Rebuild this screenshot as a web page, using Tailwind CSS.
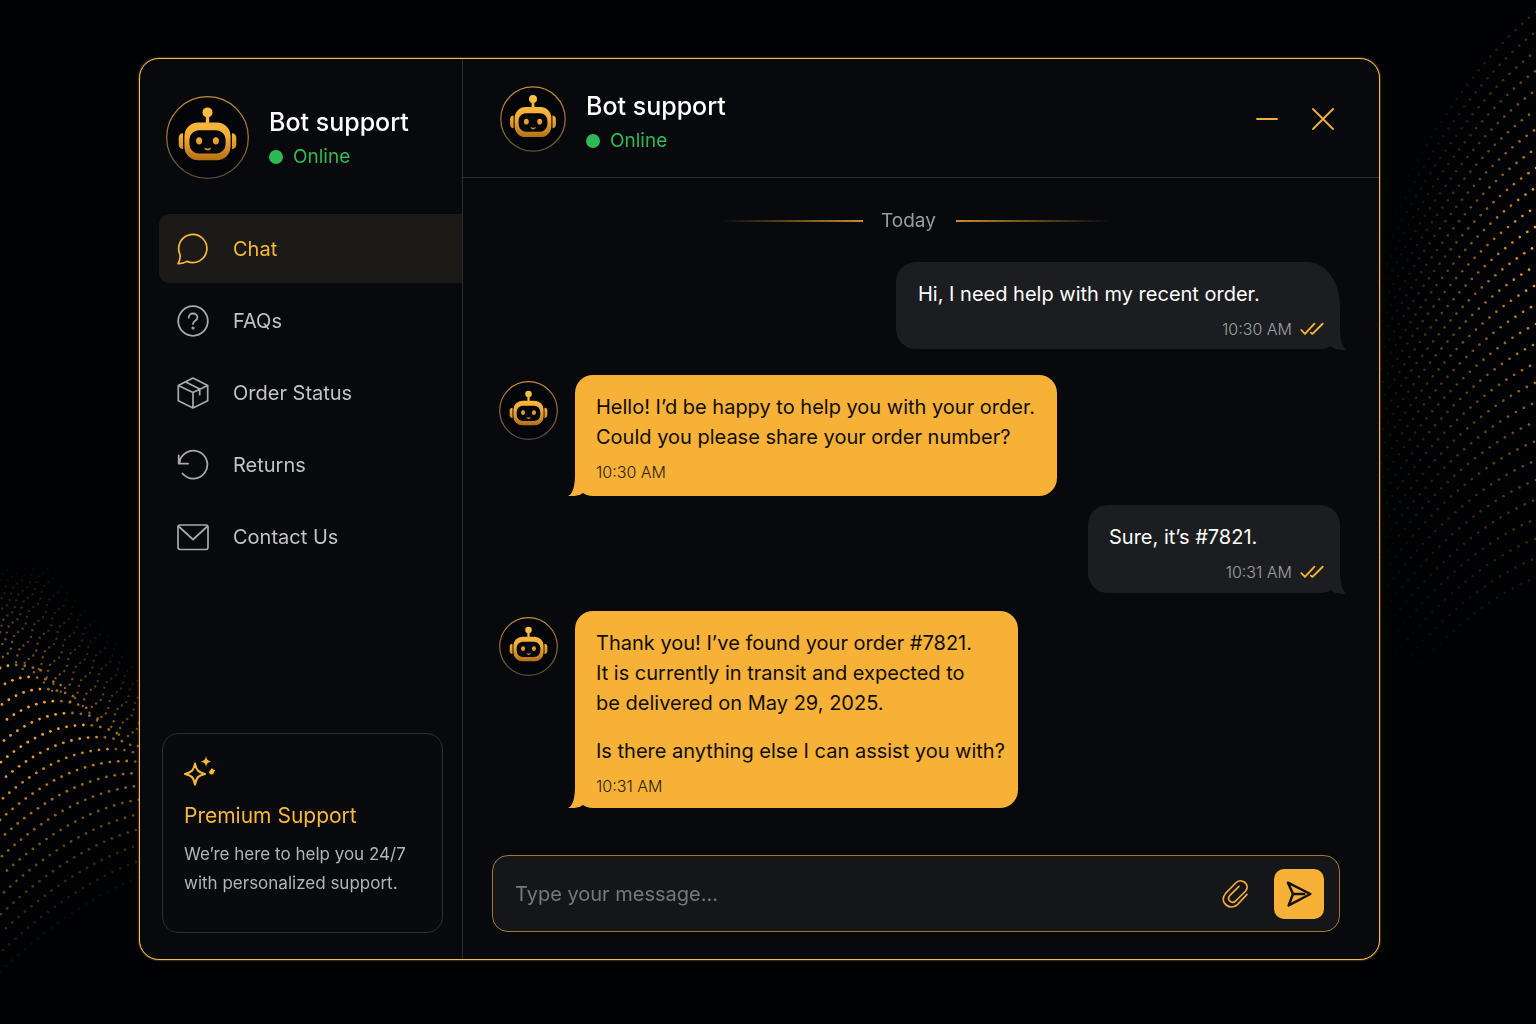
<!DOCTYPE html>
<html lang="en">
<head>
    <meta charset="UTF-8">
    <meta name="viewport" content="width=device-width, initial-scale=1.0">
    <title>Bot support</title>
    <script src="https://cdn.jsdelivr.net/npm/@tailwindcss/browser@4"></script>
</head>
<body class="relative min-h-screen flex bg-[#010204] pt-[58px] pr-[156px] pb-16 pl-[139px] font-['Inter','Liberation_Sans',sans-serif] text-white">

    <!-- Shared drawings -->
    <svg class="absolute w-0 h-0" aria-hidden="true">
        <defs>
            <linearGradient id="gold" x1="0" y1="30" x2="0" y2="196" gradientUnits="userSpaceOnUse">
                <stop offset="0" stop-color="#fcc443"/>
                <stop offset="0.55" stop-color="#f3ac34"/>
                <stop offset="1" stop-color="#b06c14"/>
            </linearGradient>
            <linearGradient id="ring" x1="0" y1="0" x2="0" y2="1">
                <stop offset="0" stop-color="#c48d38"/>
                <stop offset="1" stop-color="#5b4c39"/>
            </linearGradient>
            <symbol id="robot" viewBox="0 0 248 248">
                <g fill="url(#gold)">
                    <circle cx="124" cy="49" r="15"/>
                    <rect x="119" y="58" width="10" height="26"/>
                    <path fill-rule="evenodd" d="M96 79h56a41 41 0 0 1 41 41v31a41 41 0 0 1-41 41H96a41 41 0 0 1-41-41v-31a41 41 0 0 1 41-41zM98 102a28 28 0 0 0-28 28v14a28 28 0 0 0 28 28h52a28 28 0 0 0 28-28v-14a28 28 0 0 0-28-28z"/>
                    <path d="M51 111v48c-8 0-13-6-13-13v-22c0-7 5-13 13-13z"/>
                    <path d="M197 111v48c8 0 13-6 13-13v-22c0-7-5-13-13-13z"/>
                    <ellipse cx="99" cy="134" rx="9" ry="11"/>
                    <ellipse cx="149" cy="134" rx="9" ry="11"/>
                    <path d="M114 154q10 5 21 0q-2 9-10 9q-9 0-11-9z"/>
                </g>
            </symbol>
            <symbol id="ticks" viewBox="0 0 73 42">
                <path fill="none" stroke="#fbb834" stroke-width="5.5" stroke-linecap="round" stroke-linejoin="round" d="M4 24l11 12L44 5M33 32l5 4L69 5"/>
            </symbol>
        </defs>
    </svg>

    <!-- Dotted waves on both sides -->
    <canvas id="wave-left" width="140" height="1024" class="absolute left-0 top-0"></canvas>
    <canvas id="wave-right" width="156" height="1024" class="absolute right-0 top-0"></canvas>

    <div class="relative flex-1 flex overflow-hidden rounded-[20px] border border-[#f5bd45] bg-[#08090c] shadow-[0_0_2px_#c48d38]">

        <aside class="w-[323px] shrink-0 flex flex-col border-r border-[#2c2d30] pt-[37px] pb-[26px]">
            <div class="flex items-center gap-5 pl-[26px]">
                <svg class="w-[83px] h-[83px]" viewBox="0 0 248 248" role="img" aria-label="Bot">
                    <circle cx="124" cy="124" r="122" fill="#040508" stroke="url(#ring)" stroke-width="4"/>
                    <use href="#robot"/>
                </svg>
                <div>
                    <h2 class="text-[25px] leading-8 font-medium">Bot support</h2>
                    <p class="mt-[7px] flex items-center gap-[10px] text-[19px] leading-6 text-[#2dba55]">
                        <span class="w-[14px] h-[14px] rounded-full bg-[#2dba55]"></span>Online
                    </p>
                </div>
            </div>

            <nav class="mt-[35px] ml-[19px] flex flex-col gap-[3px] text-xl text-[#c3c3c5]">
                <a href="#" aria-current="page" class="h-[69px] flex items-center gap-6 rounded-l-[10px] bg-[#1b1a18] px-[18px] text-[#f9b836]">
                    <svg class="w-8 h-8" viewBox="0 0 32 32" fill="none" stroke="#f9b836" stroke-width="1.7" stroke-linejoin="round">
                        <path d="M1.1 30.6C2.8 27.600 3.500 24.700 3 21.500A14.100 14.100 0 1 1 10 28.400C7.300 30.100 4.600 30.800 1.100 30.600z"/>
                    </svg>
                    Chat
                </a>
                <a href="#" class="h-[69px] flex items-center gap-6 px-[18px]">
                    <svg class="w-8 h-8" viewBox="0 0 32 32" fill="none" stroke="#a9a9ab" stroke-width="1.8" stroke-linecap="round">
                        <circle cx="16" cy="16" r="14.8"/>
                        <path d="M11.7 12.7c0-2.5 1.9-4.2 4.3-4.2s4.4 1.6 4.4 3.9c0 3.4-4.4 3.2-4.4 6.6"/>
                        <circle cx="16" cy="23" r="0.7" fill="#a9a9ab"/>
                    </svg>
                    FAQs
                </a>
                <a href="#" class="h-[69px] flex items-center gap-6 px-[18px]">
                    <svg class="w-8 h-8" viewBox="0 0 32 32" fill="none" stroke="#a9a9ab" stroke-width="1.7" stroke-linejoin="round" stroke-linecap="round">
                        <path d="M16 1l14.700 7.500v15.300L16 31 1.300 23.800V8.500zM1.300 8.500L16 15.500l14.700-7M16 15.500v15.500M8.700 5l14 7.100v5.600"/>
                    </svg>
                    Order Status
                </a>
                <a href="#" class="h-[69px] flex items-center gap-6 px-[18px]">
                    <svg class="w-8 h-8" viewBox="0 0 32 32" fill="none" stroke="#a9a9ab" stroke-width="1.8" stroke-linejoin="round" stroke-linecap="round">
                        <path d="M5.500 24.500A14 14 0 1 0 2.400 14.300M1.700 6.500v8.200h9.300"/>
                    </svg>
                    Returns
                </a>
                <a href="#" class="h-[69px] flex items-center gap-6 px-[18px]">
                    <svg class="w-8 h-8" viewBox="0 0 32 32" fill="none" stroke="#a9a9ab" stroke-width="1.7" stroke-linejoin="round">
                        <rect x="1" y="4" width="30" height="24.500" rx="2.200"/>
                        <path d="M1.800 5.500L16 18.500 30.200 5.500"/>
                    </svg>
                    Contact Us
                </a>
            </nav>

            <section class="mt-auto mr-[19px] ml-[22px] rounded-2xl border border-[#2c2d30] bg-[#090a0d] pt-[22px] pr-4 pb-[34px] pl-[21px]">
                <svg class="w-[32px] h-[30px]" viewBox="0 0 93 87" aria-hidden="true">
                    <path fill="none" stroke="#fbb834" stroke-width="6" stroke-linejoin="round" d="M32 22C36 42 42 48 61 52 42 56 36 62 32 83 28 62 22 56 3 52 22 48 28 42 32 22z"/>
                    <path fill="#fbb834" d="M64 0C66 11 69 13 79 16 69 19 66 21 64 32 62 21 59 19 49 16 59 13 62 11 64 0z"/>
                    <path fill="#fbb834" d="M81 35q3 5 10 7-4 3-4 7-4 6-10 4-6-3-4-9 5-3 8-9z"/>
                </svg>
                <h3 class="mt-4 text-[21px] leading-7 text-[#f9b836]">Premium Support</h3>
                <p class="mt-[10px] text-[17px] leading-[29px] text-[#b4b5b8]">We’re here to help you 24/7<br>with personalized support.</p>
            </section>
        </aside>

        <main class="flex-1 min-w-0 flex flex-col">
            <header class="h-[119px] shrink-0 flex items-center border-b border-[#2c2d30] pt-[2px] pr-[45px] pl-[37px]">
                <svg class="w-[66px] h-[66px]" viewBox="0 0 248 248" role="img" aria-label="Bot">
                    <circle cx="124" cy="124" r="121" fill="#040508" stroke="url(#ring)" stroke-width="5"/>
                    <use href="#robot"/>
                </svg>
                <div class="ml-5">
                    <h1 class="text-[25px] leading-[38px] font-medium">Bot support</h1>
                    <p class="mt-[6px] flex items-center gap-[10px] text-[19px] leading-5 text-[#2dba55]">
                        <span class="w-[14px] h-[14px] rounded-full bg-[#2dba55]"></span>Online
                    </p>
                </div>
                <div class="ml-auto flex items-center gap-[34px]">
                    <button type="button" aria-label="Minimize">
                        <svg class="w-[22px] h-[22px]" viewBox="0 0 22 22" fill="none" stroke="#f0ae3c" stroke-width="1.8" stroke-linecap="round"><path d="M1 11h20"/></svg>
                    </button>
                    <button type="button" aria-label="Close">
                        <svg class="w-[22px] h-[22px]" viewBox="0 0 22 22" fill="none" stroke="#f1b03c" stroke-width="1.8" stroke-linecap="round"><path d="M1 1l20 20M21 1L1 21"/></svg>
                    </button>
                </div>
            </header>

            <div class="flex-1 flex flex-col pt-[31px] pr-[39px] pb-[27px] pl-[29px]">
                <div class="flex items-center justify-center text-[19px] leading-6 text-[#9b9c9f]">
                    <span class="w-[142px] h-[2px] bg-linear-to-r from-transparent to-[#c98d2b]"></span>
                    <span class="mr-5 ml-[18px]">Today</span>
                    <span class="w-[155px] h-[2px] bg-linear-to-l from-transparent to-[#c98d2b]"></span>
                </div>

                <div class="mt-[29px] flex flex-col text-xl leading-[30px]">
                    <div class="relative self-end w-[444px] rounded-[20px] rounded-tr-[32px_44px] bg-[#1c1d20] pt-[17px] pr-4 pb-2 pl-[22px]">
                        <p>Hi, I need help with my recent order.</p>
                        <p class="mt-2 flex items-center justify-end gap-2 text-base leading-6 font-light text-[#a0a1a4]">
                            10:30 AM
                            <svg class="w-6 h-[14px]" role="img" aria-label="Read"><use href="#ticks"/></svg>
                        </p>
                        <svg class="absolute -right-[7px] -bottom-px w-[21px] h-6" viewBox="0 0 21 24" fill="#1c1d20"><path d="M14 2Q14 20 21 24 11 25 4 20z"/></svg>
                    </div>

                    <div class="mt-[26px] flex items-start gap-[17px] pl-[7px]">
                        <svg class="mt-[6px] w-[59px] h-[59px]" viewBox="0 0 248 248" role="img" aria-label="Bot">
                            <circle cx="124" cy="124" r="121" fill="#040508" stroke="url(#ring)" stroke-width="5"/>
                            <use href="#robot" x="10" y="10" width="228" height="228"/>
                        </svg>
                        <div class="relative w-[482px] rounded-[18px] bg-[#f7b136] pt-[17px] pb-[12px] pl-[21px] text-[#0f0d08]">
                            <p>Hello! I’d be happy to help you with your order.<br>Could you please share your order number?</p>
                            <p class="mt-2 text-base leading-6 font-light text-[#2a2010]">10:30 AM</p>
                            <svg class="absolute -left-[7px] bottom-0 w-[21px] h-6" viewBox="0 0 21 24" fill="#f7b136"><path d="M7 2Q7 21 0 24 10 25 17 20z"/></svg>
                        </div>
                    </div>

                    <div class="relative mt-[9px] self-end w-[252px] rounded-[20px] bg-[#1c1d20] pt-[17px] pr-4 pb-[9px] pl-[21px]">
                        <p>Sure, it’s #7821.</p>
                        <p class="mt-2 flex items-center justify-end gap-2 text-base leading-6 font-light text-[#a0a1a4]">
                            10:31 AM
                            <svg class="w-6 h-[14px]" role="img" aria-label="Read"><use href="#ticks"/></svg>
                        </p>
                        <svg class="absolute -right-[7px] -bottom-px w-[21px] h-6" viewBox="0 0 21 24" fill="#1c1d20"><path d="M14 2Q14 20 21 24 11 25 4 20z"/></svg>
                    </div>

                    <div class="mt-[18px] flex items-start gap-[17px] pl-[7px]">
                        <svg class="mt-[6px] w-[59px] h-[59px]" viewBox="0 0 248 248" role="img" aria-label="Bot">
                            <circle cx="124" cy="124" r="121" fill="#040508" stroke="url(#ring)" stroke-width="5"/>
                            <use href="#robot" x="10" y="10" width="228" height="228"/>
                        </svg>
                        <div class="relative w-[443px] rounded-[18px] bg-[#f7b136] pt-[17px] pb-[10px] pl-[21px] text-[#0f0d08]">
                            <p>Thank you! I’ve found your order #7821.<br>It is currently in transit and expected to<br>be delivered on May 29, 2025.</p>
                            <p class="mt-[18px]">Is there anything else I can assist you with?</p>
                            <p class="mt-2 text-base leading-6 font-light text-[#2a2010]">10:31 AM</p>
                            <svg class="absolute -left-[7px] bottom-0 w-[21px] h-6" viewBox="0 0 21 24" fill="#f7b136"><path d="M7 2Q7 21 0 24 10 25 17 20z"/></svg>
                        </div>
                    </div>
                </div>

                <form class="mt-auto h-[77px] shrink-0 flex items-center rounded-2xl border border-[#a37832] bg-[#15161a] pr-[15px] pl-[22px]">
                    <input type="text" aria-label="Message" placeholder="Type your message..." class="flex-1 min-w-0 bg-transparent text-xl outline-none placeholder:text-[#77787c]">
                    <button type="button" aria-label="Attach file" class="mr-[25px]">
                        <svg class="w-[28px] h-[30px]" viewBox="0 0 84 90" fill="none" stroke="#f0a93a" stroke-width="5" stroke-linecap="round">
                            <path d="M78 46L50 76C28 98-8 70 13 44L44 12C60-6 90 16 74 36L44 66C32 76 16 62 26 50L54 22"/>
                        </svg>
                    </button>
                    <button type="submit" aria-label="Send" class="w-[50px] h-[50px] flex items-center justify-center rounded-[10px] bg-[#f7b136]">
                        <svg class="w-[26px] h-[26px]" viewBox="0 0 78 78" fill="none" stroke="#14110a" stroke-width="7.5" stroke-linejoin="round" stroke-linecap="round">
                            <path d="M6 5l67 34L8 73l13-34zM21 39h34"/>
                        </svg>
                    </button>
                </form>
            </div>
        </main>
    </div>

    <script>
        const clamp = v => Math.max(0, Math.min(1, v));

        function dot(ctx, x, y, r, alpha) {
            if (alpha < 0.02) return;
            ctx.fillStyle = `rgba(245, 165, 35, ${alpha})`;
            ctx.beginPath();
            ctx.arc(x, y, r, 0, Math.PI * 2);
            ctx.fill();
        }

        // Left wave: arcs that climb to a ridge, with faint strands rising behind it
        const left = document.getElementById('wave-left').getContext('2d');
        for (let n = 0; n < 17; n++) {
            const y0 = 668 + 19 * n;
            const peakX = 15 + 14 * n;
            const rise = 3 + 7 * n;
            for (let x = (n * 5) % 8; x < Math.min(140, peakX + 32); ) {
                const past = x - peakX;
                const t = past / peakX;
                const y = y0 - rise + (past > 0 ? past * past * 0.008 : rise * t * t);
                const alpha = n < 6 ? 1 : clamp(1 - (n - 5) * 0.085);
                dot(left, x, y, 1.4, alpha * (past > 0 ? 0.65 : 1));
                const slope = 2 * rise / peakX * Math.abs(t);
                x += 8.5 / Math.sqrt(1 + slope * slope);
            }
        }
        for (let n = 0; n < 20; n++) {
            const x0 = -44 + n * 9.5;
            const ridge = 655 + Math.max(0, x0) * 0.68;
            const height = 100 - Math.max(0, x0) * 0.3;
            for (let d = (n * 3) % 5; d < height; d += 5) {
                const wobble = Math.sin(n * 7 + d) * 1.5;
                dot(left, x0 + d * 0.6 + wobble, ridge - d + wobble, 1.2, 0.6 * Math.pow(1 - d / height, 1.4));
            }
        }

        // Right wave: lines falling away from the right edge
        const right = document.getElementById('wave-right').getContext('2d');
        for (let n = 0; n < 30; n++) {
            const y0 = 12 + 19.5 * n;
            const k = clamp(n / 22);
            const a = 0.8 - 0.4 * k;
            const b = 0.0038 - 0.0008 * k;
            const glow = clamp(1.1 - Math.abs(y0 - 225) / (y0 < 225 ? 240 : 370));
            for (let d = (n * 3) % 8; d < 156; ) {
                const y = y0 + a * d + b * d * d;
                const slope = a + 2 * b * d;
                dot(right, 156 - d, y, 1.35, glow * Math.pow(1 - d / 180, 1.4));
                d += 9 / Math.sqrt(1 + slope * slope);
            }
        }
    </script>
</body>
</html>
